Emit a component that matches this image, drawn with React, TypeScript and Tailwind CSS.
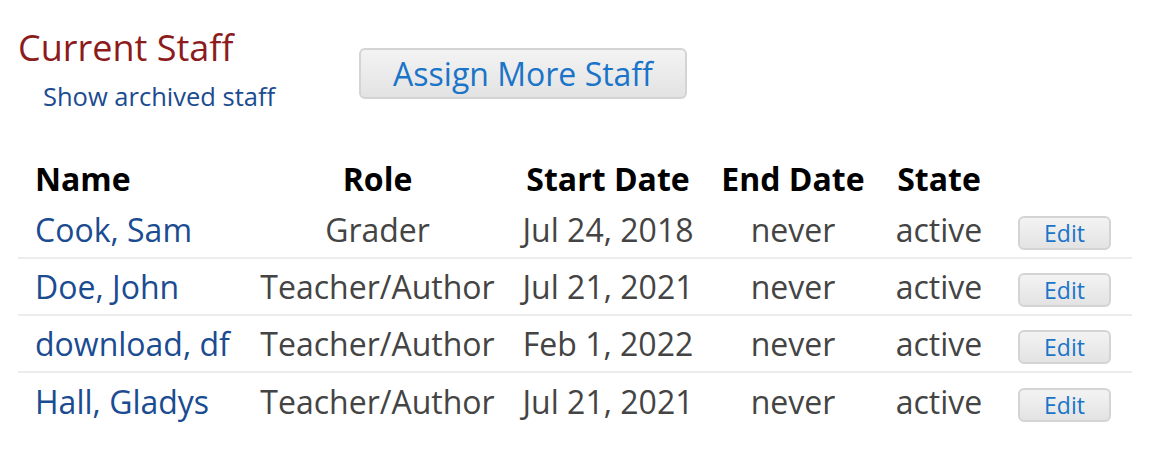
const staff = [
  { name: "Cook, Sam", role: "Grader", start: "Jul 24, 2018" },
  { name: "Doe, John", role: "Teacher/Author", start: "Jul 21, 2021" },
  { name: "download, df", role: "Teacher/Author", start: "Feb 1, 2022" },
  { name: "Hall, Gladys", role: "Teacher/Author", start: "Jul 21, 2021" },
];

const cols = "grid grid-cols-[237px_245px_216px_154px_138px_124px] items-center";

function GreyButton({ label, className = "" }: { label: string; className?: string }) {
  return (
    <button
      className={`rounded-[6px] border-2 border-[#d4d4d4] bg-gradient-to-b from-[#f3f3f3] to-[#e3e3e3] text-[#1a74c8] ${className}`}
    >
      {label}
    </button>
  );
}

export default function App() {
  return (
    <div className="h-[466px] w-[1164px] bg-white font-['Open_Sans',sans-serif]">
      <div className="flex pl-[18px] pt-[26px]">
        <div className="w-[341px]">
          <h1 className="text-[36px] leading-[44px] text-[#8c1c1c]">Current Staff</h1>
          <a className="ml-[25px] mt-[10px] block text-[25.5px] leading-[32px] text-[#1b4b90]">Show archived staff</a>
        </div>
        <div className="pt-[22px]">
          <GreyButton label="Assign More Staff" className="h-[51px] w-[328px] text-[32px] leading-none" />
        </div>
      </div>

      <div className="ml-[18px] mt-[43px] w-[1114px] text-[32px]">
        <div className={`${cols} h-[47px] pb-[4px] font-bold text-black`}>
          <div className="pl-[17px]">Name</div>
          <div className="text-center">Role</div>
          <div className="text-center">Start Date</div>
          <div className="text-center">End Date</div>
          <div className="text-center">State</div>
          <div />
        </div>
        {staff.map((s, i) => (
          <div
            key={s.name}
            className={`${cols} h-[57px] text-[#444] ${i < staff.length - 1 ? "border-b-2 border-[#ececec]" : ""}`}
          >
            <a className="pl-[17px] text-[#1b4b90]">{s.name}</a>
            <div className="text-center">{s.role}</div>
            <div className="text-center">{s.start}</div>
            <div className="text-center">never</div>
            <div className="text-center">active</div>
            <div className="pl-[10px]">
              <GreyButton label="Edit" className="h-[34px] w-[93px] text-[23px] leading-none" />
            </div>
          </div>
        ))}
      </div>
    </div>
  );
}
